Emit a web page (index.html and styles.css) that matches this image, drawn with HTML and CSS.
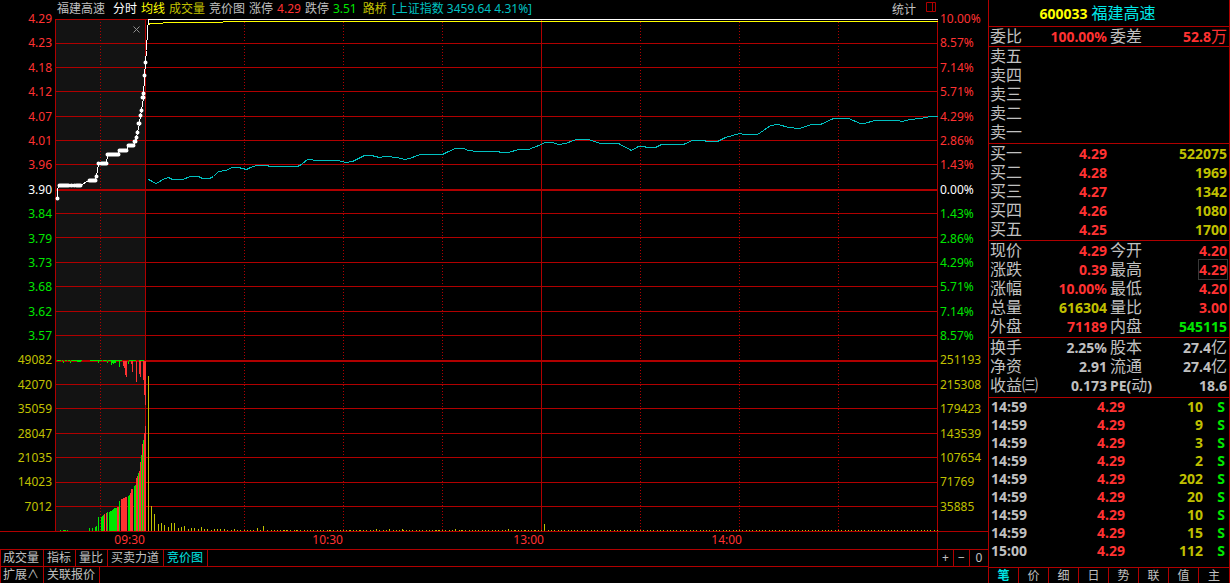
FILE: index.html
```html
<!DOCTYPE html>
<html lang="zh-CN">
<head>
<meta charset="utf-8">
<meta name="viewport" content="width=device-width, initial-scale=1">
<title>福建高速 600033</title>
<link rel="stylesheet" href="styles.css">
</head>
<body>
<main class="main">
  <header class="legend">
    <h1 class="legend-name">福建高速</h1>
    <span class="white">分时</span>
    <span class="yellow">均线</span>
    <span class="olive">成交量</span>
    <span>竞价图</span>
    <span>涨停</span>
    <span class="red">4.29</span>
    <span>跌停</span>
    <span class="green">3.51</span>
    <span class="olive legend-sector">路桥</span>
    <span class="teal">[上证指数 3459.64 4.31%]</span>
    <button class="stat-button" type="button">统计</button>
    <button class="panel-button" type="button" aria-label="侧栏">
      <svg width="10" height="10" viewBox="0 0 10 10"><path d="M.5 .5H9.5V9.5H.5ZM6.5 .5V9.5" fill="none" stroke="#b00000"/></svg>
    </button>
  </header>

  <section class="chart-row">
    <ol class="axis axis-left">
      <li class="red">4.29</li><li class="red">4.23</li><li class="red">4.18</li><li class="red">4.12</li><li class="red">4.07</li><li class="red">4.01</li><li class="red">3.96</li>
      <li class="white">3.90</li>
      <li class="green">3.84</li><li class="green">3.79</li><li class="green">3.73</li><li class="green">3.68</li><li class="green">3.62</li><li class="green">3.57</li>
      <li class="olive">49082</li><li class="olive">42070</li><li class="olive">35059</li><li class="olive">28047</li><li class="olive">21035</li><li class="olive">14023</li><li class="olive">7012</li>
    </ol>
    <div class="plot">
      <svg class="plot-svg" viewBox="54.5 18.5 883 512" preserveAspectRatio="none" role="img" aria-label="分时走势">
        <rect x="55.5" y="19.5" width="90" height="512" fill="#131313"/>
        <g fill="none" stroke="#b00000" shape-rendering="crispEdges">
          <path d="M55 19H937M55 43H937M55 67H937M55 91H937M55 116H937M55 140H937M55 164H937M55 213H937M55 237H937M55 262H937M55 286H937M55 311H937M55 335H937M55 384H937M55 408H937M55 433H937M55 457H937M55 482H937M55 506H937"/>
          <path d="M55 189.5H937M55 360.5H937" stroke-width="2"/>
          <path d="M55 18.5V531M145 18.5V531M541 18.5V531M937 18.5V531"/>
          <path d="M100 21.5V531M244 21.5V531M343 21.5V531M442 21.5V531M640 21.5V531M739 21.5V531M838 21.5V531" stroke-dasharray="1 2"/>
        </g>
        <g fill="none" stroke="#00e600" shape-rendering="crispEdges">
          <path d="M56.5 360H60M61 360H62M64 360H66M67 360H69M70 360H81M89 360H101M102 360H106M107 360H121M128 360H135M138 360H143"/>
          <path d="M63 360V362M70 360V362M76.5 361H80M98 360V362M107 360V362M111 360V364M112 360V362M113 360V363M114 360V362M115 360V362M119 360V366M128 360V363"/>
          <path d="M57 530V531M58 530V531M60 529V531M63 529V531M64 529V531M65 529V531M67 529V531M70 530V531M73 530V531M76 530V531M77 530V531M78 530V531M79 530V531M80 530V531M89 527V531M92 527V531M95 526V531M96 525V531M98 516V531M101 516V531M102 515V531M103 514V531M107 511V531M109 511V531M110 510V531M111 510V531M112 509V531M113 508V531M114 507V531M115 507V531M116 507V531M119 500V531M128 495V531M129 494V531M134 485V531M135 484V531M138 472V531M141 454V531M143 439V531"/>
        </g>
        <path d="M104 513V531M106 512V531M117 506V531M118 506V531M121 498V531M122 498V531M123 497V531M124 497V531M125 496V531M126 496V531M130 492V531M131 488V531M132 488V531M136 477V531M137 475V531M139 470V531M140 461V531M142 443V531M144 432V531M145 425V531M123 360V365M124 360V367M125 360V374M126 360V376M131 360V363M132 360V371M136 360V381M139 360V373M140 360V376M143 360V379M144 360V394M145 360V404" fill="none" stroke="#ff3232" shape-rendering="crispEdges"/>
        <g fill="none" stroke="#c0c000" shape-rendering="crispEdges">
          <path d="M148 375V531M151 505V531M154 513V531M158 523V531M161 522V531M164 524V531M168 526V531M171 522V531M174 522V531M178 527V531M181 526V531M184 525V531M188 528V531M191 527V531M194 527V531M198 528V531M201 526V531M204 528V531M207 528V531M211 529V531M214 528V531M217 528V531M220 528V531M224 528V531M227 529V531M231 529V531M234 528V531M237 529V531M240 529V531M244 529V531M247 529V531M250 529V531M253 529V531M257 527V531M260 529V531M263 525V531M267 529V531M280 529V531M283 529V531M286 529V531M296 529V531M329 529V531M343 529V531M346 529V531M349 529V531M359 529V531M366 529V531M376 528V531M389 528V531M402 528V531M409 529V531M435 529V531M438 529V531M455 528V531M461 529V531M508 528V531M514 529V531M524 529V531M534 529V531M544 523V531M640 529V531"/>
          <path d="M270 530H937" stroke-dasharray="1 2.3"/>
        </g>
        <path d="M148 179L152 181L155 183L158 182L162 179L168 177L172 179H182L190 176H198L202 178H209L213 176L218 171L225 170L232 167H238L246 169L250 167L256 165H266L270 166H297L301 164L307 159L318 160H337L346 162L352 161L358 158L364 155H371L379 157L385 156L397 157L404 159L409 158L420 154H442L448 151L455 148H463L468 150L477 151H497L501 152H508L518 149H528L541 144L544 142H552L558 144L565 143L576 139H588L600 143H618L631 150L638 146H644L646 147H655L661 144H683L692 140H704L706 141H717L725 137L739 133L744 134H757L763 130L770 125L778 124L788 127L799 128L811 124H820L833 118H848L860 123H864L874 120H898L901 121L910 119L920 118L930 116H937" fill="none" stroke="#00c0c0" shape-rendering="crispEdges"/>
        <path d="M148 25L149 23H162L163 22H222L223 21H937" fill="none" stroke="#ffff00" shape-rendering="crispEdges"/>
        <path d="M57 198V190L58 185H80L88 180H95L96 176L98 163H106L107 154H118L119 150H126L128 145H133L135 141L136 137L137 132L139 123L140 115L141 110L143 97L144 75L145 62L146 50L147 30L148 19H937" fill="none" stroke="#ffffff" shape-rendering="crispEdges"/>
        <path d="M57 198h0M59 185H68M71 185h0M74 185h0M76 185H80M89 180H95M96 176h0M98 163h0M101 163H106M107 154H118M119 150H126M128 145H133M134 141h1M136 137h0M137 132h0M138 123h1M140 115h0M141 110h0M142 97h1M143 93h0M144 75h0M145 62h0" fill="none" stroke="#ffffff" stroke-width="4" stroke-linecap="round"/>
      </svg>
      <button class="plot-close" type="button" aria-label="关闭">
        <svg width="7" height="7" viewBox="0 0 7 7"><path d="M.5 .5L6.5 6.5M6.5 .5L.5 6.5" fill="none" stroke="#909090"/></svg>
      </button>
    </div>
    <ol class="axis axis-right">
      <li class="red">10.00%</li><li class="red">8.57%</li><li class="red">7.14%</li><li class="red">5.71%</li><li class="red">4.29%</li><li class="red">2.86%</li><li class="red">1.43%</li>
      <li class="white">0.00%</li>
      <li class="green">1.43%</li><li class="green">2.86%</li><li class="green">4.29%</li><li class="green">5.71%</li><li class="green">7.14%</li><li class="green">8.57%</li>
      <li class="olive">251193</li><li class="olive">215308</li><li class="olive">179423</li><li class="olive">143539</li><li class="olive">107654</li><li class="olive">71769</li><li class="olive">35885</li>
    </ol>
  </section>

  <div class="time-row">
    <div class="times"><span>09:30</span><span>10:30</span><span>13:00</span><span>14:00</span></div>
    <div class="time-end"></div>
  </div>

  <nav class="tabs tabs-upper">
    <button type="button">成交量</button>
    <button type="button">指标</button>
    <button type="button">量比</button>
    <button type="button">买卖力道</button>
    <button type="button" class="cyan">竞价图</button>
    <div class="zoom-buttons">
      <button type="button">+</button>
      <button type="button">−</button>
      <button type="button">0</button>
    </div>
  </nav>
  <nav class="tabs">
    <button type="button">扩展∧</button>
    <button type="button">关联报价</button>
  </nav>
</main>

<aside class="side">
  <h2 class="side-title"><b class="yellow">600033</b> <span class="cyan">福建高速</span></h2>
  <table class="quote quote-ratio">
    <colgroup><col class="c-label"><col class="c-value"><col class="c-label2"><col></colgroup>
    <tbody><tr><th>委比</th><td class="red">100.00%</td><th>委差</th><td class="red">52.8<span class="unit">万</span></td></tr></tbody>
  </table>
  <table class="quote">
    <colgroup><col class="c-label"><col class="c-value"><col></colgroup>
    <tbody>
      <tr><th>卖五</th><td></td><td></td></tr>
      <tr><th>卖四</th><td></td><td></td></tr>
      <tr><th>卖三</th><td></td><td></td></tr>
      <tr><th>卖二</th><td></td><td></td></tr>
      <tr><th>卖一</th><td></td><td></td></tr>
    </tbody>
  </table>
  <table class="quote">
    <colgroup><col class="c-label"><col class="c-value"><col></colgroup>
    <tbody>
      <tr><th>买一</th><td class="red">4.29</td><td class="olive">522075</td></tr>
      <tr><th>买二</th><td class="red">4.28</td><td class="olive">1969</td></tr>
      <tr><th>买三</th><td class="red">4.27</td><td class="olive">1342</td></tr>
      <tr><th>买四</th><td class="red">4.26</td><td class="olive">1080</td></tr>
      <tr><th>买五</th><td class="red">4.25</td><td class="olive">1700</td></tr>
    </tbody>
  </table>
  <table class="quote">
    <colgroup><col class="c-label"><col class="c-value"><col class="c-label2"><col></colgroup>
    <tbody>
      <tr><th>现价</th><td class="red">4.29</td><th>今开</th><td class="red">4.20</td></tr>
      <tr><th>涨跌</th><td class="red">0.39</td><th>最高</th><td class="red"><span class="marked">4.29</span></td></tr>
      <tr><th>涨幅</th><td class="red">10.00%</td><th>最低</th><td class="red">4.20</td></tr>
      <tr><th>总量</th><td class="olive">616304</td><th>量比</th><td class="red">3.00</td></tr>
      <tr><th>外盘</th><td class="red">71189</td><th>内盘</th><td class="green">545115</td></tr>
    </tbody>
  </table>
  <table class="quote quote-finance">
    <colgroup><col class="c-label"><col class="c-value"><col class="c-label2"><col></colgroup>
    <tbody>
      <tr><th>换手</th><td>2.25%</td><th>股本</th><td>27.4<span class="unit">亿</span></td></tr>
      <tr><th>净资</th><td>2.91</td><th>流通</th><td>27.4<span class="unit">亿</span></td></tr>
      <tr><th>收益㈢</th><td>0.173</td><th><b>PE(</b>动<b>)</b></th><td>18.6</td></tr>
    </tbody>
  </table>
  <table class="ticks">
    <tbody>
      <tr><td>14:59</td><td class="red">4.29</td><td class="olive">10</td><td class="green">S</td></tr>
      <tr><td>14:59</td><td class="red">4.29</td><td class="olive">9</td><td class="green">S</td></tr>
      <tr><td>14:59</td><td class="red">4.29</td><td class="olive">3</td><td class="green">S</td></tr>
      <tr><td>14:59</td><td class="red">4.29</td><td class="olive">2</td><td class="green">S</td></tr>
      <tr><td>14:59</td><td class="red">4.29</td><td class="olive">202</td><td class="green">S</td></tr>
      <tr><td>14:59</td><td class="red">4.29</td><td class="olive">20</td><td class="green">S</td></tr>
      <tr><td>14:59</td><td class="red">4.29</td><td class="olive">10</td><td class="green">S</td></tr>
      <tr><td>14:59</td><td class="red">4.29</td><td class="olive">15</td><td class="green">S</td></tr>
      <tr><td>15:00</td><td class="red">4.29</td><td class="olive">112</td><td class="green">S</td></tr>
    </tbody>
  </table>
  <nav class="side-tabs">
    <button type="button" class="cyan active">笔</button>
    <button type="button">价</button>
    <button type="button">细</button>
    <button type="button">日</button>
    <button type="button">势</button>
    <button type="button">联</button>
    <button type="button">值</button>
    <button type="button">主</button>
  </nav>
</aside>
</body>
</html>
```

FILE: styles.css
```css
:root {
  --line: #b00000;
  --text: #c0c0c0;
  --digits: "Noto Sans", "Noto Sans CJK SC", sans-serif;
  --labels: "Liberation Sans", "Noto Sans CJK SC", sans-serif;
}

* {
  box-sizing: border-box;
}

body {
  margin: 0;
  min-height: 100vh;
  display: grid;
  grid-template-columns: minmax(0, 1fr) 242px;
  background: #000;
  color: var(--text);
  font: 12px/16px var(--digits);
}

button {
  margin: 0;
  padding: 0;
  border: 0;
  background: none;
  color: inherit;
  font: inherit;
  white-space: nowrap;
}

svg {
  display: block;
}

.red { color: #ff3232; }
.green { color: #00e600; }
.olive { color: #c0c000; }
.yellow { color: #ffff00; }
.white { color: #ffffff; }
.teal { color: #00c0c0; }
.cyan { color: #00e6e6; }

/* Chart side */
.main {
  display: flex;
  flex-direction: column;
}

.legend {
  display: flex;
  gap: 4px;
  height: 19px;
  padding-left: 57px;
  padding-right: 52px;
  line-height: 17px;
  white-space: nowrap;
}

.legend-name {
  margin: 0 4px 0 0;
  font-size: 12px;
  font-weight: 400;
}

.legend-sector {
  margin: 0 1px 0 2px;
}

.stat-button {
  margin-left: auto;
  margin-right: 6px;
}

.panel-button {
  align-self: flex-start;
  padding-top: 2px;
}

.chart-row {
  flex: 1;
  display: flex;
  border-bottom: 1px solid var(--line);
}

.axis {
  display: flex;
  flex-direction: column;
  justify-content: space-between;
  margin: -8px 0 16px;
  padding: 0;
  list-style: none;
}

.axis-left {
  width: 55px;
  padding-right: 3px;
  text-align: right;
}

.axis-right {
  width: 50px;
  padding-left: 2px;
}

.plot {
  position: relative;
  flex: 1;
  min-width: 0;
}

.plot-svg {
  position: absolute;
  inset: 0;
  width: 100%;
  height: 100%;
}

/* Sits in the top right corner of the call-auction band */
.plot-close {
  position: absolute;
  right: 91%;
  top: 7px;
}

.plot-close svg {
  margin-right: -6px;
}

.time-row {
  display: flex;
  height: 17px;
  color: #ff3232;
}

.times {
  flex: 1;
  display: grid;
  grid-template-columns: 145fr 198fr 201fr 198fr 195fr;
  text-align: right;
}

.time-end {
  width: 51px;
  border-left: 1px solid var(--line);
}

.tabs {
  display: flex;
  height: 16px;
  box-shadow: inset 1px 0 var(--line);
}

.tabs button {
  padding: 0 4px 0 3px;
  border-right: 1px solid var(--line);
}

.tabs-upper {
  height: 18px;
  border-top: 1px solid var(--line);
  border-bottom: 1px solid var(--line);
}

.zoom-buttons {
  display: grid;
  grid-template-columns: 16px 16px 18px;
  width: 51px;
  margin-left: auto;
  border-left: 1px solid var(--line);
}

.zoom-buttons button {
  padding: 0;
}

.zoom-buttons button:last-child {
  border-right: 0;
}

/* Quote side */
.side {
  display: flex;
  flex-direction: column;
  border: solid var(--line);
  border-width: 0 1px;
}

.side-title {
  margin: 0;
  height: 26px;
  padding-right: 23px;
  font-size: 16px;
  font-weight: 400;
  line-height: 26px;
  text-align: center;
}

.side-title b {
  font-size: 14px;
}

.quote,
.ticks {
  width: 100%;
  table-layout: fixed;
  border-collapse: separate;
  border-spacing: 0;
  border-top: 1px solid var(--line);
  white-space: nowrap;
}

.quote {
  padding-bottom: 1px;
}

.quote-ratio {
  padding-bottom: 0;
}

.quote-finance {
  padding-bottom: 2px;
}

.quote th,
.quote td,
.ticks td {
  padding: 0;
  height: 19px;
  line-height: 19px;
}

.quote th {
  padding-left: 1px;
  font-family: var(--labels);
  font-size: 16px;
  font-weight: 400;
  line-height: 18px;
  text-align: left;
}

.quote td {
  padding-right: 2px;
  font-size: 14px;
  font-weight: 700;
  text-align: right;
}

.quote th b {
  font-family: var(--digits);
  font-size: 14px;
  line-height: 0;
}

.c-label { width: 34px; }
.c-value { width: 86px; }
.c-label2 { width: 40px; }

.unit {
  font-family: var(--labels);
  font-size: 16px;
  font-weight: 400;
  line-height: 0;
}

.marked {
  outline: 1px solid #383838;
}

.ticks td {
  width: 66px;
  height: 18px;
  font-size: 14px;
  font-weight: 700;
  line-height: 18px;
  text-align: right;
}

.ticks td:first-child {
  width: 70px;
  padding-left: 2px;
  text-align: left;
}

.ticks td:nth-child(3) {
  width: 78px;
}

.ticks td:last-child {
  width: auto;
  padding-right: 4px;
}

.side-tabs {
  display: grid;
  grid-template-columns: repeat(8, 1fr);
  height: 16px;
  margin-top: auto;
  border-top: 1px solid var(--line);
}

.side-tabs button {
  border-right: 1px solid var(--line);
}

.side-tabs button:last-child {
  border-right: 0;
}

.side-tabs .active {
  font-weight: 700;
}
```
